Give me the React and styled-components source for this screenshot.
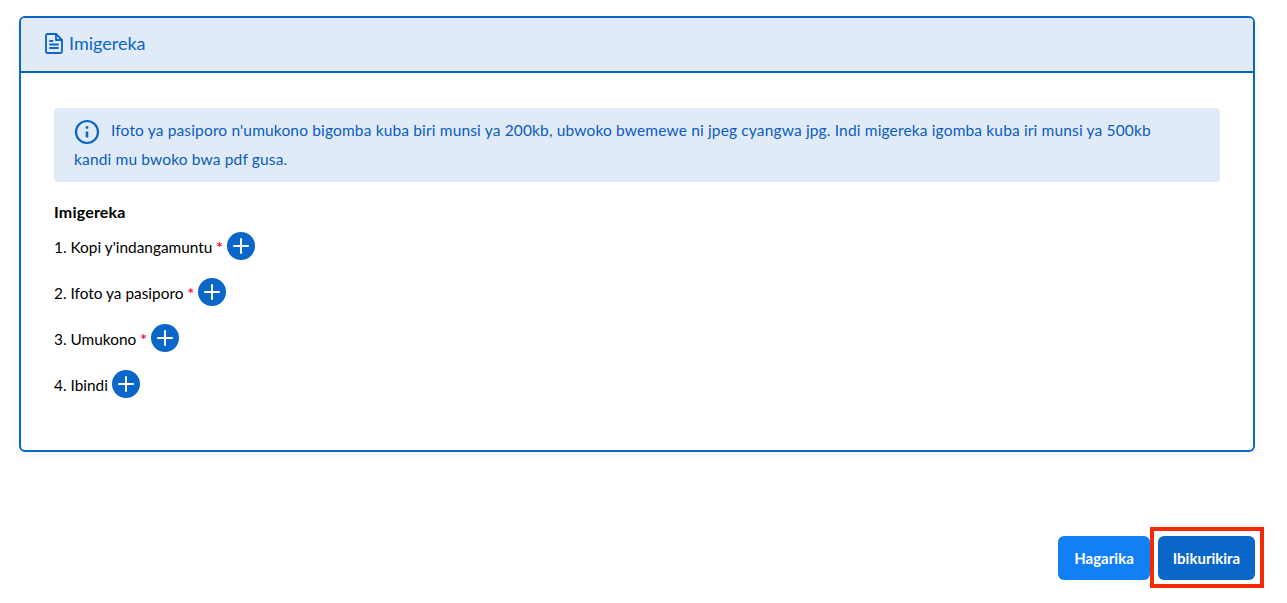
import styled, { createGlobalStyle } from "styled-components";

const GlobalStyle = createGlobalStyle`
  html, body {
    margin: 0;
    background: #fff;
    font-family: "Lato", "Open Sans", sans-serif;
  }
`;

const Page = styled.div`
  width: 1287px;
  height: 603px;
  box-sizing: border-box;
  padding: 16px 32px 0 19px;
  overflow: hidden;
`;

const Card = styled.section`
  box-sizing: border-box;
  width: 1236px;
  height: 436px;
  border: 2px solid #0b66c9;
  border-radius: 6px;
  box-shadow: 0 4px 12px rgba(0, 0, 0, 0.04);
`;

const CardHeader = styled.header`
  box-sizing: border-box;
  height: 55px;
  display: flex;
  align-items: center;
  gap: 6px;
  padding: 0 0 3px 24px;
  background: #e0ebf7;
  border-bottom: 2px solid #0b66c9;
  border-radius: 4px 4px 0 0;
  color: #0b66c9;
  font-size: 18px;
`;

const CardBody = styled.div`
  padding: 35px 33px 0;
`;

const Alert = styled.div`
  box-sizing: border-box;
  height: 74px;
  padding: 8px 40px 8px 20px;
  background: #e0ebf7;
  border-radius: 4px;
  color: #0b5cc0;
  font-size: 15.5px;
  letter-spacing: 0.15px;
  line-height: 28px;
`;

const AlertIcon = styled.svg`
  width: 26px;
  height: 26px;
  margin-right: 11px;
  vertical-align: -9px;
`;

const Title = styled.h4`
  margin: 20px 0 0;
  font-size: 16px;
  letter-spacing: 0.2px;
  line-height: 20px;
  font-weight: 700;
  color: #000;
`;

const DocList = styled.div`
  display: flex;
  flex-direction: column;
  margin-top: 11px;
  gap: 18px;
`;

const DocRow = styled.div`
  display: flex;
  align-items: center;
  gap: 4px;
  height: 28px;
  font-size: 15.4px;
  color: #000;
`;

const Required = styled.span`
  color: #f0143c;
  font-weight: 700;
`;

const AddButton = styled.button`
  width: 28px;
  height: 28px;
  padding: 0;
  border: 0;
  border-radius: 50%;
  background: #0b66c9;
  display: flex;
  align-items: center;
  justify-content: center;
  margin-top: -2px;
`;

const Actions = styled.div`
  display: flex;
  justify-content: flex-end;
  gap: 8px;
  margin-top: 84px;
`;

const ActionButton = styled.button`
  position: relative;
  box-sizing: border-box;
  width: ${(p) => p.$width}px;
  height: 44px;
  border: 0;
  border-radius: 6px;
  background: ${(p) => (p.$dark ? "#0b66c9" : "#127ff5")};
  color: #fff;
  font-family: inherit;
  font-size: 15px;
  font-weight: 700;
`;

const Highlight = styled.span`
  position: absolute;
  top: -9px;
  left: -8px;
  right: -9px;
  bottom: -8px;
  border: 4.5px solid #f42a06;
`;

const docs = [
  { label: "1. Kopi y'indangamuntu", required: true },
  { label: "2. Ifoto ya pasiporo", required: true },
  { label: "3. Umukono", required: true },
  { label: "4. Ibindi", required: false },
];

function FileIcon() {
  return (
    <svg width="18" height="21" viewBox="0 0 18 21" fill="none" stroke="#0b66c9" strokeWidth="1.8" strokeLinejoin="round" strokeLinecap="round">
      <path d="M2.5 1h8.5l6 6v11.5a1.5 1.5 0 0 1-1.5 1.5h-13a1.5 1.5 0 0 1-1.5-1.5v-16a1.5 1.5 0 0 1 1.5-1.5z" />
      <path d="M11 1v6h6" />
      <path d="M5 8h2.5M5 11.5h8M5 15h8" />
    </svg>
  );
}

function InfoIcon() {
  return (
    <AlertIcon viewBox="0 0 26 26" fill="none" stroke="#0b66c9" strokeWidth="2.2" strokeLinecap="round">
      <circle cx="13" cy="13" r="11" />
      <path d="M13 12.5v6" strokeWidth="2.6" strokeLinecap="butt" />
      <circle cx="13" cy="8.5" r="1.4" fill="#0b66c9" stroke="none" />
    </AlertIcon>
  );
}

function PlusIcon() {
  return (
    <svg width="18" height="18" viewBox="0 0 18 18" stroke="#fff" strokeWidth="2" strokeLinecap="round">
      <path d="M9 2v14M2 9h14" />
    </svg>
  );
}

export default function App() {
  return (
    <Page>
      <GlobalStyle />
      <Card>
        <CardHeader>
          <FileIcon />
          Imigereka
        </CardHeader>
        <CardBody>
          <Alert>
            <InfoIcon />
            Ifoto ya pasiporo n'umukono bigomba kuba biri munsi ya 200kb, ubwoko bwemewe ni jpeg cyangwa jpg. Indi migereka igomba kuba iri munsi ya 500kb kandi mu bwoko bwa pdf gusa.
          </Alert>
          <Title>Imigereka</Title>
          <DocList>
            {docs.map((doc) => (
              <DocRow key={doc.label}>
                <span>
                  {doc.label} {doc.required && <Required>*</Required>}
                </span>
                <AddButton type="button" aria-label="Add">
                  <PlusIcon />
                </AddButton>
              </DocRow>
            ))}
          </DocList>
        </CardBody>
      </Card>
      <Actions>
        <ActionButton $width={92}>Hagarika</ActionButton>
        <ActionButton $width={97} $dark>
          Ibikurikira
          <Highlight />
        </ActionButton>
      </Actions>
    </Page>
  );
}
